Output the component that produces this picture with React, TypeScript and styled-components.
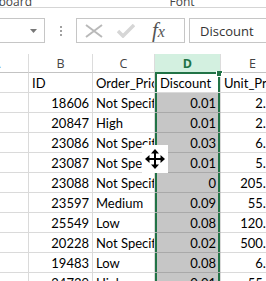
import * as React from "react";
import styled, { createGlobalStyle, css } from "styled-components";

const GlobalStyle = createGlobalStyle`
  html, body {
    margin: 0;
    padding: 0;
    background: #ffffff;
  }
  body {
    width: 266px;
    height: 281px;
    overflow: hidden;
  }
`;

type Row = {
  id: string;
  priority: string;
  discount: string;
  price: string;
};

const rows: Row[] = [
  { id: "18606", priority: "Not Specified", discount: "0.01", price: "2.84" },
  { id: "20847", priority: "High", discount: "0.01", price: "2.89" },
  { id: "23086", priority: "Not Specified", discount: "0.03", price: "6.68" },
  { id: "23087", priority: "Not Specified", discount: "0.01", price: "5.68" },
  { id: "23088", priority: "Not Specified", discount: "0", price: "205.99" },
  { id: "23597", priority: "Medium", discount: "0.09", price: "55.48" },
  { id: "25549", priority: "Low", discount: "0.08", price: "120.98" },
  { id: "20228", priority: "Not Specified", discount: "0.02", price: "500.98" },
  { id: "19483", priority: "Low", discount: "0.08", price: "6.48" },
  { id: "24739", priority: "High", discount: "0.01", price: "55.99" },
];

const columns = ["A", "B", "C", "D", "E"];

export default function App() {
  return (
    <Screen>
      <GlobalStyle />
      <Ribbon>
        <GroupLabel $width={86}>Clipboard</GroupLabel>
        <Launcher>
          <svg width="5" height="5" viewBox="0 0 5 5">
            <path d="M0 0h3M0 0v3M1 1l4 4M2 5h3V2" stroke="#666" strokeWidth="1" fill="none" />
          </svg>
        </Launcher>
        <GroupDivider />
        <GroupLabel $width={182} $center>
          Font
        </GroupLabel>
      </Ribbon>

      <FormulaRow>
        <NameBox>
          <svg width="7" height="4" viewBox="0 0 7 4">
            <path d="M0 0h7L3.5 4z" fill="#777" />
          </svg>
        </NameBox>
        <Grip>
          <span />
          <span />
          <span />
        </Grip>
        <FxButtons>
          <svg width="18" height="14" viewBox="0 0 18 14">
            <path d="M1 1l16 12M17 1L1 13" stroke="#b9b9b9" strokeWidth="2" fill="none" />
          </svg>
          <svg width="18" height="14" viewBox="0 0 18 14">
            <path d="M1 7l5 5L17 1" stroke="#d6d6d6" strokeWidth="3.5" fill="none" />
          </svg>
          <FxLabel>
            f<sub>x</sub>
          </FxLabel>
        </FxButtons>
        <FormulaInput>Discount</FormulaInput>
      </FormulaRow>

      <Sheet>
        {columns.map((c) => (
          <HeaderCell key={c} $active={c === "D"}>
            {c}
          </HeaderCell>
        ))}

        <Cell />
        <Cell>ID</Cell>
        <Cell>Order_Priority</Cell>
        <Cell $selected $first>
          Discount
          <FillHandle />
        </Cell>
        <Cell>Unit_Price</Cell>

        {rows.map((r) => (
          <React.Fragment key={r.id}>
            <Cell />
            <Cell $right>{r.id}</Cell>
            <Cell>{r.priority}</Cell>
            <Cell $right $selected $shaded>
              {r.discount}
            </Cell>
            <Cell $right>{r.price}</Cell>
          </React.Fragment>
        ))}
      </Sheet>

      <MoveCursor>
        <svg width="26" height="28" viewBox="0 0 26 28">
          <rect width="26" height="28" fill="#ffffff" />
          <path
            d="M13 4l4 4.5h-3v4.5h4.5v-3l4.5 4-4.5 4v-3H14v4.5h3L13 24l-4-4.5h3V15H7.5v3L3 14l4.5-4v3H12V8.5H9z"
            fill="#000"
          />
        </svg>
      </MoveCursor>
    </Screen>
  );
}

const Screen = styled.div`
  position: relative;
  width: 266px;
  height: 281px;
  overflow: hidden;
  background: #ffffff;
`;

const Ribbon = styled.div`
  display: flex;
  align-items: flex-end;
  height: 7px;
  overflow: hidden;
  border-bottom: 1px solid #d5d5d5;
  margin-left: -50px;
`;

const GroupLabel = styled.div<{ $width: number; $center?: boolean }>`
  width: ${(p) => p.$width}px;
  flex: none;
  text-align: ${(p) => (p.$center ? "center" : "right")};
  font-family: "Open Sans", sans-serif;
  font-size: 12px;
  line-height: 11px;
  color: #444;
  padding-right: 4px;
  box-sizing: border-box;
`;

const Launcher = styled.div`
  width: 8px;
  height: 7px;
  display: flex;
  align-items: flex-start;
  margin-left: 50px;
  margin-top: -3px;
  align-self: flex-start;
  & svg {
    margin-top: -2px;
  }
`;

const GroupDivider = styled.div`
  width: 1px;
  height: 6px;
  align-self: flex-start;
  background: #d5d5d5;
  margin: 0 0 0 2px;
`;

const FormulaRow = styled.div`
  display: flex;
  align-items: center;
  height: 25px;
  margin-top: 10px;
`;

const boxBorder = css`
  box-sizing: border-box;
  height: 25px;
  border: 1px solid #c6c6c6;
  background: #ffffff;
`;

const NameBox = styled.div`
  ${boxBorder};
  width: 46px;
  margin-left: -1px;
  display: flex;
  align-items: center;
  justify-content: flex-end;
  padding-right: 7px;
`;

const Grip = styled.div`
  width: 31px;
  display: flex;
  flex-direction: column;
  align-items: center;
  gap: 2px;
  & span {
    width: 2px;
    height: 2px;
    background: #a0a0a0;
  }
`;

const FxButtons = styled.div`
  ${boxBorder};
  width: 109px;
  display: flex;
  align-items: center;
  gap: 14px;
  padding-left: 8px;
`;

const FxLabel = styled.span`
  font-family: "Liberation Serif", serif;
  font-style: italic;
  font-size: 21px;
  color: #555;
  margin-left: 3px;
  line-height: 20px;
  & sub {
    font-size: 16px;
    vertical-align: 0;
  }
`;

const FormulaInput = styled.div`
  ${boxBorder};
  flex: 1;
  margin-left: 4px;
  margin-right: -10px;
  padding-left: 10px;
  display: flex;
  align-items: center;
  font-family: "Open Sans", sans-serif;
  font-size: 13px;
  color: #333;
`;

const Sheet = styled.div`
  display: grid;
  grid-template-columns: 64px 64px 62px 66px 64px;
  grid-auto-rows: 20px;
  grid-template-rows: 19px;
  margin-top: 11px;
  margin-left: -35px;
  font-family: Lato, sans-serif;
  font-size: 13px;
  color: #000;
`;

const HeaderCell = styled.div<{ $active?: boolean }>`
  box-sizing: border-box;
  display: flex;
  align-items: center;
  justify-content: center;
  border-right: 1px solid #dcdcdc;
  border-bottom: 1px solid ${(p) => (p.$active ? "#217346" : "#c3c3c3")};
  background: ${(p) => (p.$active ? "#d3f0e0" : "#ffffff")};
  color: ${(p) => (p.$active ? "#217346" : "#444")};
  font-family: "Open Sans", sans-serif;
  font-weight: ${(p) => (p.$active ? 700 : 400)};
  font-size: 12.5px;
`;

const Cell = styled.div<{
  $right?: boolean;
  $selected?: boolean;
  $shaded?: boolean;
  $first?: boolean;
}>`
  position: relative;
  box-sizing: border-box;
  display: flex;
  align-items: center;
  justify-content: ${(p) => (p.$right ? "flex-end" : "flex-start")};
  padding: ${(p) => (p.$selected ? "1px 4px 0 5px" : "1px 3px 0 3px")};
  white-space: nowrap;
  overflow: ${(p) => (p.$first ? "visible" : "hidden")};
  border-right: 1px solid #dadada;
  border-bottom: 1px solid ${(p) => (p.$shaded ? "#a9a9a9" : "#dadada")};
  background: ${(p) => (p.$shaded ? "#c6c6c6" : "#ffffff")};
  ${(p) =>
    p.$selected &&
    css`
      box-shadow: inset 2px 0 #217346, inset -2px 0 #217346
        ${p.$first ? ", inset 0 1px #217346" : ""};
    `}
`;

const FillHandle = styled.span`
  position: absolute;
  right: -3px;
  top: -2px;
  width: 5px;
  height: 5px;
  background: #217346;
  border: 1px solid #ffffff;
  border-top: none;
`;

const MoveCursor = styled.div`
  position: absolute;
  left: 142px;
  top: 145px;
  width: 26px;
  height: 28px;
  & svg {
    display: block;
  }
`;
